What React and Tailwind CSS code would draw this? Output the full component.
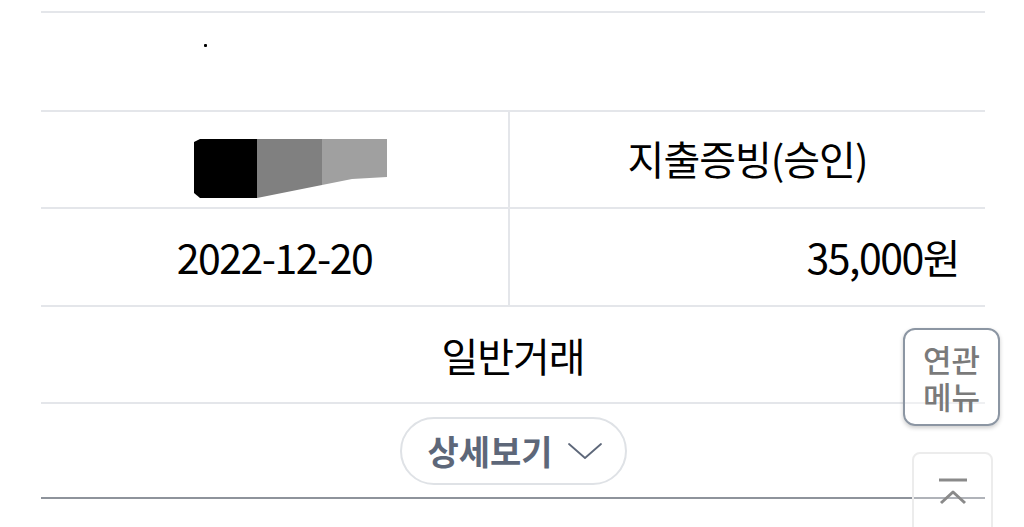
const font = { fontFamily: '"Noto Sans CJK KR", "Noto Sans", sans-serif' };

function Redacted() {
    return (
        <svg width="200" height="64" viewBox="0 0 200 64" xmlns="http://www.w3.org/2000/svg">
            <path d="M2 4 L8 1 L65 1 L65 60 L8 60 L2 55 Z" fill="#000" />
            <path d="M65 1 L130 1 L130 47 L100 53 L65 60 Z" fill="#808080" />
            <path d="M130 1 L195 1 L195 39 L160 41 L130 47 Z" fill="#a0a0a0" />
        </svg>
    );
}

export default function App() {
    return (
        <div className="relative w-[1024px] h-[527px] bg-white overflow-hidden text-black" style={font}>
            <div className="pt-[11px] pl-[41px] pr-[39px]">
                <div className="h-[2px] bg-[#e4e6ea]" />
                <div className="h-[97px] relative">
                    <div className="absolute left-[163px] top-[31px] w-[3px] h-[3px] bg-black rounded-[1px]" />
                </div>
                <div className="h-[2px] bg-[#e4e6ea]" />
                <div className="grid grid-cols-[467px_2px_1fr]">
                    <div className="h-[95px] flex items-center justify-center">
                        <div className="ml-[34px] mt-[20px]">
                            <Redacted />
                        </div>
                    </div>
                    <div className="bg-[#e4e6ea]" />
                    <div className="h-[95px] flex items-center justify-center text-[40px] tracking-[-1px] pb-[4px]">
                        지출증빙(승인)
                    </div>
                </div>
                <div className="grid grid-cols-[467px_2px_1fr]">
                    <div className="col-span-3 h-[2px] bg-[#e4e6ea]" />
                    <div className="h-[96px] flex items-center justify-center text-[41px] tracking-[-1.5px]">
                        2022-12-20
                    </div>
                    <div className="bg-[#e4e6ea]" />
                    <div className="h-[96px] flex items-center justify-end pr-[26px] text-[41px] tracking-[-1.5px]">
                        35,000원
                    </div>
                </div>
                <div className="h-[2px] bg-[#e4e6ea]" />
                <div className="h-[95px] flex items-center justify-center text-[40px] tracking-[-1px]">
                    일반거래
                </div>
                <div className="h-[2px] bg-[#e4e6ea]" />
                <div className="h-[93px] flex items-center justify-center">
                    <button className="h-[68px] w-[227px] rounded-full border-2 border-[#dfe2e6] flex items-center justify-center gap-[14px] text-[34px] font-bold text-[#5d6779] pl-[4px]">
                        상세보기
                        <svg width="36" height="20" viewBox="0 0 36 20" fill="none">
                            <path d="M2 3 L18 17 L34 3" stroke="#5d6779" strokeWidth="1.8" strokeLinecap="round" strokeLinejoin="round" />
                        </svg>
                    </button>
                </div>
                <div className="h-[2px] bg-[#8e939b]" />
            </div>

            <div className="absolute left-[903px] top-[328px] w-[97px] h-[98px] rounded-[12px] border-2 border-[#8c96a3] bg-white/40 shadow-[0_2px_4px_rgba(0,0,0,0.2)] flex items-center justify-center text-center text-[#7a7a7a] text-[31px] leading-[37px] font-medium">
                <span>
                    연관
                    <br />
                    메뉴
                </span>
            </div>

            <div className="absolute left-[912px] top-[452px] w-[81px] h-[90px] rounded-[8px] border-2 border-[#ececec] bg-white/30 flex flex-col items-center pt-[22px]">
                <svg width="34" height="32" viewBox="0 0 34 32" fill="none">
                    <path d="M3 4 L31 4" stroke="#8a8a8a" strokeWidth="3" />
                    <path d="M5 27 L17 16 L29 27" stroke="#8a8a8a" strokeWidth="3" strokeLinejoin="round" />
                </svg>
            </div>
        </div>
    );
}
